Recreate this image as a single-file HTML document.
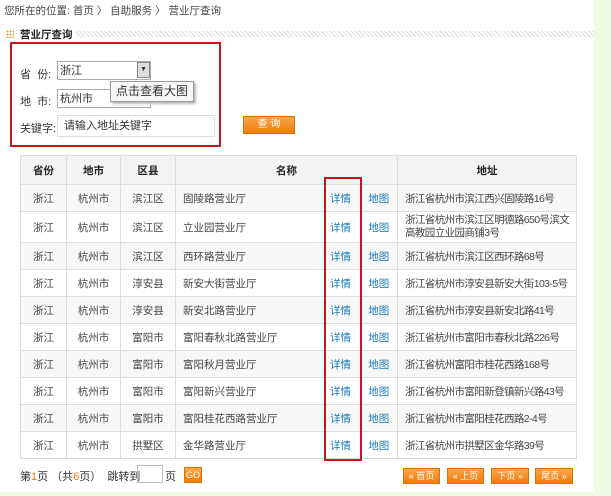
<!DOCTYPE html><html><head><meta charset="utf-8"><style>
body{margin:0;width:611px;height:496px;background:#fff;position:relative;overflow:hidden;font-family:"Liberation Sans","Noto Sans CJK SC",sans-serif;font-size:11px;color:#333}
.abs{position:absolute}
table{border-collapse:collapse;position:absolute;left:20px;top:155px;width:556px;table-layout:fixed}
td{border:1px solid #ddd;height:26px;padding:0;text-align:center;font-size:10.5px;color:#444;white-space:nowrap;overflow:hidden}
tr:nth-child(even) td{background:#f8f8f8}
th{border:1px solid #ddd;height:26px;background:#f3f3f3;font-size:10.5px;color:#222}
td.l{text-align:left;padding-left:7px}
td.ad{font-size:10.5px;letter-spacing:-0.6px}
td.nb{border-left:none;border-right:none}
a{color:#1a7bb9;text-decoration:none}
.btn{position:absolute;background:linear-gradient(#f9a54a,#ee7d0c);color:#fff;font-size:9px;text-align:center;line-height:14px;height:14px;border:1px solid #e07000}
</style></head><body>
<div class="abs" style="left:594px;top:0;width:17px;height:496px;background:#f0fbe4"></div>
<div class="abs" style="left:0;top:492px;width:611px;height:4px;background:#f0fbe4"></div>
<div class="abs" style="left:4px;top:3px;font-size:10.5px;color:#444">您所在的位置: 首页 〉 自助服务 〉 营业厅查询</div>
<div class="abs" style="left:6px;top:30px;width:8px;height:8px;background:radial-gradient(#e9a23b 40%,transparent 41%) 0 0/3px 3px"></div>
<div class="abs" style="left:20px;top:27px;font-size:10.5px;font-weight:bold;color:#222">营业厅查询</div>
<div class="abs" style="left:76px;top:31px;width:518px;height:6px;background:repeating-linear-gradient(45deg,#ddd 0 1px,transparent 1px 3px)"></div>
<div class="abs" style="left:10px;top:42px;width:207px;height:101px;border:2px solid #c4161c"></div>
<div class="abs" style="left:20px;top:66px">省 &nbsp;份:</div>
<div class="abs" style="left:57px;top:61px;width:92px;height:17px;border:1px solid #aaa;background:#fff;line-height:19px;text-indent:2px">浙江</div>
<div class="abs" style="left:137px;top:62px;width:11px;height:14px;background:#ddd;border:1px solid #888;font-size:7px;text-align:center;line-height:14px">▼</div>
<div class="abs" style="left:20px;top:93px">地 &nbsp;市:</div>
<div class="abs" style="left:57px;top:89px;width:92px;height:17px;border:1px solid #aaa;background:#fff;line-height:19px;text-indent:2px">杭州市</div>
<div class="abs" style="left:110px;top:81px;width:82px;height:19px;border:1px solid #999;background:#f7f7f7;box-shadow:2px 2px 2px #bbb;font-size:12px;line-height:19px;text-align:center;color:#333">点击查看大图</div>
<div class="abs" style="left:20px;top:120px">关键字:</div>
<div class="abs" style="left:57px;top:115px;width:156px;height:20px;border:1px solid #ddd;line-height:20px;text-indent:6px">请输入地址关键字</div>
<div class="btn" style="left:243px;top:116px;width:50px;height:16px;line-height:16px;font-size:10px">查 询</div>
<table>
<colgroup><col style="width:46px"><col style="width:54px"><col style="width:55px"><col style="width:145px"><col style="width:40px"><col style="width:37px"><col style="width:179px"></colgroup>
<tr><th>省份</th><th>地市</th><th>区县</th><th colspan="3">名称</th><th>地址</th></tr>
<tr><td>浙江</td><td>杭州市</td><td>滨江区</td><td class="l nb">固陵路营业厅</td><td class="nb"><a>详情</a></td><td class="nb"><a>地图</a></td><td class="l ad">浙江省杭州市滨江西兴固陵路16号</td></tr>
<tr><td style="height:30px">浙江</td><td>杭州市</td><td>滨江区</td><td class="l nb">立业园营业厅</td><td class="nb"><a>详情</a></td><td class="nb"><a>地图</a></td><td class="l ad" style="line-height:13px">浙江省杭州市滨江区明德路650号滨文<br>高教园立业园商铺3号</td></tr>
<tr><td>浙江</td><td>杭州市</td><td>滨江区</td><td class="l nb">西环路营业厅</td><td class="nb"><a>详情</a></td><td class="nb"><a>地图</a></td><td class="l ad">浙江省杭州市滨江区西环路68号</td></tr>
<tr><td>浙江</td><td>杭州市</td><td>淳安县</td><td class="l nb">新安大街营业厅</td><td class="nb"><a>详情</a></td><td class="nb"><a>地图</a></td><td class="l ad">浙江省杭州市淳安县新安大街103-5号</td></tr>
<tr><td>浙江</td><td>杭州市</td><td>淳安县</td><td class="l nb">新安北路营业厅</td><td class="nb"><a>详情</a></td><td class="nb"><a>地图</a></td><td class="l ad">浙江省杭州市淳安县新安北路41号</td></tr>
<tr><td>浙江</td><td>杭州市</td><td>富阳市</td><td class="l nb">富阳春秋北路营业厅</td><td class="nb"><a>详情</a></td><td class="nb"><a>地图</a></td><td class="l ad">浙江省杭州市富阳市春秋北路226号</td></tr>
<tr><td>浙江</td><td>杭州市</td><td>富阳市</td><td class="l nb">富阳秋月营业厅</td><td class="nb"><a>详情</a></td><td class="nb"><a>地图</a></td><td class="l ad">浙江省杭州富阳市桂花西路168号</td></tr>
<tr><td>浙江</td><td>杭州市</td><td>富阳市</td><td class="l nb">富阳新兴营业厅</td><td class="nb"><a>详情</a></td><td class="nb"><a>地图</a></td><td class="l ad">浙江省杭州市富阳新登镇新兴路43号</td></tr>
<tr><td>浙江</td><td>杭州市</td><td>富阳市</td><td class="l nb">富阳桂花西路营业厅</td><td class="nb"><a>详情</a></td><td class="nb"><a>地图</a></td><td class="l ad">浙江省杭州市富阳桂花西路2-4号</td></tr>
<tr><td>浙江</td><td>杭州市</td><td>拱墅区</td><td class="l nb">金华路营业厅</td><td class="nb"><a>详情</a></td><td class="nb"><a>地图</a></td><td class="l ad">浙江省杭州市拱墅区金华路39号</td></tr>
</table>
<div class="abs" style="left:324px;top:177px;width:34px;height:280px;border:2px solid #c4161c"></div>
<div class="abs" style="left:20px;top:468px">第<span style="color:#e87b0b">1</span>页 （共<span style="color:#e87b0b">6</span>页） &nbsp;跳转到</div>
<div class="abs" style="left:137px;top:465px;width:24px;height:16px;border:1px solid #bbb"></div>
<div class="abs" style="left:165px;top:468px">页</div>
<div class="btn" style="left:184px;top:467px;width:16px">GO</div>
<div class="btn" style="left:403px;top:468px;width:35px">« 首页</div>
<div class="btn" style="left:447px;top:468px;width:35px">« 上页</div>
<div class="btn" style="left:491px;top:468px;width:36px">下页 »</div>
<div class="btn" style="left:535px;top:468px;width:36px">尾页 »</div>
</body></html>
